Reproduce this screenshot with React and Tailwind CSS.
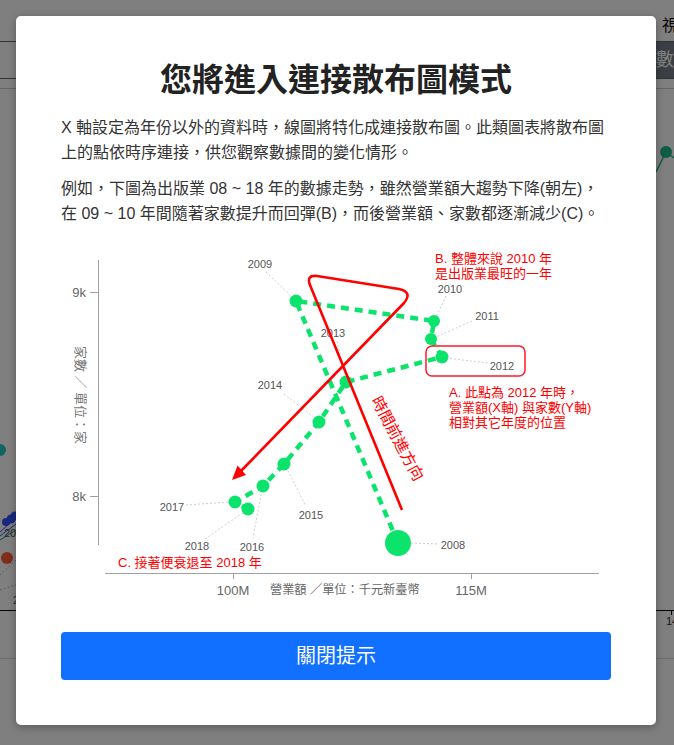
import React from "react";

const GREEN = "#0be36c";
const RED = "#ff0000";

const pts = [
  [2008, 398, 544, 13],
  [2009, 296, 302, 6.5],
  [2010, 434, 322, 6],
  [2011, 431, 340, 6],
  [2012, 442, 358, 6.5],
  [2013, 346, 383, 6.5],
  [2014, 319, 423, 6.5],
  [2015, 284, 465, 6.5],
  [2016, 263, 487, 6.5],
  [2017, 235, 503, 6.5],
  [2018, 248, 510, 6.5],
];

const labels = [
  ["2008", 453, 546, [411, 544, 439, 545]],
  ["2009", 260, 265, [266, 273, 293, 299]],
  ["2010", 450, 290, [446, 297, 436, 318]],
  ["2011", 487, 317, [472, 322, 436, 338]],
  ["2012", 502, 367, [446, 359, 488, 364]],
  ["2013", 333, 334, [337, 342, 345, 378]],
  ["2014", 270, 386, [284, 395, 316, 420]],
  ["2015", 311, 516, [286, 468, 306, 507]],
  ["2016", 252, 548, [262, 491, 253, 539]],
  ["2017", 172, 508, [186, 506, 230, 503]],
  ["2018", 197, 547, [205, 540, 244, 513]],
];

function Chart() {
  const poly = pts.map((p) => `${p[1]},${p[2]}`).join(" ");
  return (
    <svg width="550" height="370" viewBox="61 237 550 370" className="block">
      {/* axes */}
      <line x1="98.5" y1="261" x2="98.5" y2="546" stroke="#a0a0a0" strokeWidth="1" />
      <line x1="90" y1="293.5" x2="98" y2="293.5" stroke="#a0a0a0" />
      <line x1="90" y1="497.5" x2="98" y2="497.5" stroke="#a0a0a0" />
      <text x="86" y="293" textAnchor="end" dominantBaseline="central" fontSize="13" fill="#666">9k</text>
      <text x="86" y="497" textAnchor="end" dominantBaseline="central" fontSize="13" fill="#666">8k</text>
      <text
        transform="translate(80 396) rotate(90)"
        textAnchor="middle"
        dominantBaseline="central"
        fontSize="13"
        fill="#777"
      >
        家數 ／ 單位：家
      </text>

      <line x1="105" y1="574.5" x2="599" y2="574.5" stroke="#a0a0a0" />
      <line x1="233.5" y1="574" x2="233.5" y2="580" stroke="#a0a0a0" />
      <line x1="471.5" y1="574" x2="471.5" y2="580" stroke="#a0a0a0" />
      <text x="233" y="591" textAnchor="middle" dominantBaseline="central" fontSize="13" fill="#666">100M</text>
      <text x="471" y="591" textAnchor="middle" dominantBaseline="central" fontSize="13" fill="#666">115M</text>
      <text x="270" y="591" dominantBaseline="central" fontSize="12.2" fill="#666">營業額 ／單位：千元新臺幣</text>

      {/* leaders */}
      {labels.map(([t, , , l]) => (
        <line key={"l" + t} x1={l[0]} y1={l[1]} x2={l[2]} y2={l[3]} stroke="#cfcfcf" strokeWidth="1" strokeDasharray="2 2" />
      ))}

      {/* dashed path */}
      <polyline points={poly} fill="none" stroke={GREEN} strokeWidth="4.5" strokeDasharray="8 6" />
      {pts.map(([y, x, yy, r]) => (
        <circle key={y} cx={x} cy={yy} r={r} fill={GREEN} />
      ))}

      {/* year labels */}
      {labels.map(([t, x, y]) => (
        <text key={t} x={x} y={y} textAnchor="middle" dominantBaseline="central" fontSize="11" fill="#555">
          {t}
        </text>
      ))}

      {/* red annotations */}
      <path
        d="M 402 511 L 310 286 Q 306 276 317 277 L 399 290 Q 413 293 404 304 L 240 473"
        fill="none"
        stroke={RED}
        strokeWidth="2.6"
        strokeLinejoin="round"
      />
      <polygon points="232,481 246,476 237.5,466.5" fill={RED} />
      <rect x="426" y="347" width="99" height="30" rx="6" fill="none" stroke="#ff1a2a" strokeWidth="1.5" />
      <text transform="translate(371 401) rotate(62)" fontSize="15.5" fill={RED}>
        時間前進方向
      </text>

      <text x="435" y="259" dominantBaseline="central" fontSize="13" fill={RED}>B. 整體來說 2010 年</text>
      <text x="435" y="274" dominantBaseline="central" fontSize="13" fill={RED}>是出版業最旺的一年</text>

      <text x="449" y="393" dominantBaseline="central" fontSize="13" fill={RED}>A. 此點為 2012 年時，</text>
      <text x="449" y="408" dominantBaseline="central" fontSize="13" fill={RED}>營業額(X軸) 與家數(Y軸)</text>
      <text x="449" y="423" dominantBaseline="central" fontSize="13" fill={RED}>相對其它年度的位置</text>

      <text x="118" y="563" dominantBaseline="central" fontSize="13" fill={RED}>C. 接著便衰退至 2018 年</text>
    </svg>
  );
}

function Backdrop() {
  return (
    <div className="flex flex-col">
      <div className="h-[41px] flex items-end justify-end">
        <span className="text-[16px] leading-[22px] text-[#111] mb-[4px] mr-[-4px]">視</span>
      </div>
      <div className="h-[38px] border-y border-[#666] flex justify-end">
        <div className="w-[18px] bg-[#767e8a] text-white text-[18px] leading-[36px] overflow-hidden whitespace-nowrap">數值</div>
      </div>
      <div className="h-[10px] border-b border-[#ccc]"></div>
      <svg width="674" height="656" viewBox="0 89 674 656" className="block">
        <line x1="656" y1="172" x2="666" y2="152" stroke="#20b890" strokeWidth="1.5" />
        <line x1="666" y1="152" x2="674" y2="158" stroke="#20b890" strokeWidth="1.5" />
        <circle cx="666" cy="152" r="6" fill="#1fb88a" />
        <circle cx="0" cy="450" r="6" fill="#22c8c8" />
        <line x1="0" y1="532" x2="16" y2="518" stroke="#3050ff" />
        <line x1="0" y1="536" x2="16" y2="524" stroke="#3050ff" />
        <line x1="0" y1="540" x2="16" y2="530" stroke="#1a9a7a" />
        <circle cx="6" cy="522" r="4" fill="#3050ff" />
        <circle cx="11" cy="519" r="4.5" fill="#3050ff" />
        <circle cx="15" cy="516" r="4.5" fill="#3050ff" />
        <text x="4" y="537" fontSize="11" fill="#555">201</text>
        <circle cx="7" cy="558" r="6" fill="#ff5a3a" />
        <line x1="0" y1="575" x2="16" y2="560" stroke="#bbb" strokeDasharray="2 2" />
        <line x1="0" y1="590" x2="16" y2="585" stroke="#bbb" strokeDasharray="2 2" />
        <text x="13" y="604" fontSize="11" fill="#555">2</text>
        <line x1="0" y1="610.5" x2="16" y2="610.5" stroke="#111" />
        <line x1="656" y1="610.5" x2="674" y2="610.5" stroke="#111" />
        <line x1="671.5" y1="610" x2="671.5" y2="615" stroke="#111" />
        <text x="666" y="625" fontSize="11" fill="#333">14</text>
        <line x1="0" y1="658.5" x2="674" y2="658.5" stroke="#ddd" />
      </svg>
    </div>
  );
}

export default function App() {
  return (
    <div className="relative w-[674px] h-[745px] overflow-hidden bg-white font-['Liberation_Sans','Noto_Sans_CJK_TC',sans-serif]">
      <Backdrop />
      <div className="absolute inset-0 bg-black/50">
        <div className="ml-4 mt-4 w-[640px] h-[709px] bg-white rounded-[5px] shadow-[0_2px_8px_rgba(0,0,0,0.3)] px-[45px] pt-[40px] flex flex-col">
          <h1 className="text-[32px] leading-[48px] font-bold text-center text-[#222]">您將進入連接散布圖模式</h1>
          <p className="mt-[11px] text-[16px] leading-[25px] text-[#333]">
            X 軸設定為年份以外的資料時，線圖將特化成連接散布圖。此類圖表將散布圖<br />
            上的點依時序連接，供您觀察數據間的變化情形。
          </p>
          <p className="mt-[11px] text-[16px] leading-[25px] text-[#333]">
            例如，下圖為出版業 08 ~ 18 年的數據走勢，雖然營業額大趨勢下降(朝左)，<br />
            在 09 ~ 10 年間隨著家數提升而回彈(B)，而後營業額、家數都逐漸減少(C)。
          </p>
          <div className="mt-[10px]">
            <Chart />
          </div>
          <button className="mt-[26px] h-[48px] w-[550px] rounded-[4px] bg-[#1170ff] text-white text-[20px]">
            關閉提示
          </button>
        </div>
      </div>
    </div>
  );
}
